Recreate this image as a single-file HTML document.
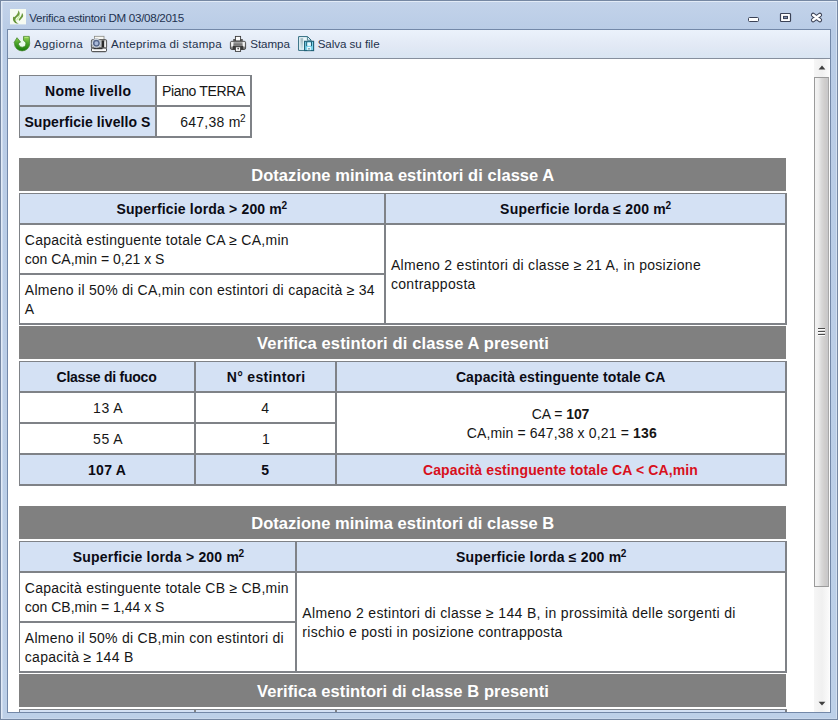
<!DOCTYPE html>
<html><head><meta charset="utf-8">
<style>
*{box-sizing:border-box;margin:0;padding:0}
html,body{width:838px;height:720px;overflow:hidden;background:#bccfe8;font-family:"Liberation Sans",sans-serif;}
#win{position:absolute;left:0;top:0;width:838px;height:720px;background:linear-gradient(#c3d3ea 0,#b9cce6 29px,#bdd0e8 100%);border:1px solid #7688a3;}
#hl{position:absolute;left:1px;top:1px;width:836px;height:718px;border:1px solid #e2ebf7;border-right-color:#d3e0f1;border-bottom-color:#c9d8ec;box-shadow:inset 1px 0 0 #d0ddef}
#inner{position:absolute;left:7px;top:29px;width:824px;height:684px;border:1px solid #7388a8;background:#fff;}
#tb{position:absolute;left:8px;top:30px;width:822px;height:29px;background:linear-gradient(#ebf2fb 0,#e2e9f5 55%,#d9e5f2 100%);border-bottom:1px solid #868f9d}
#clip{position:absolute;left:8px;top:59px;width:806px;height:653px;overflow:hidden;background:#fff}
#page{position:absolute;left:-8px;top:-59px;width:838px;height:800px}
#sb{position:absolute;left:814px;top:59px;width:16px;height:653px;background:linear-gradient(90deg,#f6f6f6,#f0f0f0 50%,#fafafa 92%,#fff)}
#thumb{position:absolute;left:0;top:18px;width:15px;height:510px;border:1px solid #9b9b9b;border-right-color:#a8a8a8;background:linear-gradient(90deg,#f3f3f3 0,#eeeeee 25%,#dadada 48%,#cfcdcc 75%,#c8c8ca 100%)}
.band{position:absolute;left:19px;width:767px;height:33px;background:#808080}
.c{position:absolute;border:1px solid #7f8287;background:#fff}
.h{background:#d4e1f4}
.o{position:absolute;border-right:1px solid #7f8287;border-bottom:1px solid #7f8287}
.t{position:absolute;white-space:nowrap;line-height:20px;font-family:"Liberation Sans",sans-serif}
sup{font-size:0.72em;line-height:0;vertical-align:0.52em;letter-spacing:0;margin-left:-0.5px}
svg{position:absolute;overflow:visible}
</style></head><body>
<div id="win"></div><div id="hl"></div>
<div id="inner"></div>
<div id="tb"></div>
<div id="clip"><div id="page">
<div class=o style="left:19px;top:75px;width:233px;height:63px"></div><div class=o style="left:19px;top:193px;width:768px;height:132px"></div><div class=o style="left:19px;top:361px;width:768px;height:125px"></div><div class=o style="left:19px;top:541px;width:768px;height:132px"></div><div class=o style="left:19px;top:709px;width:768px;height:52px"></div><div class="c h" style="left:19px;top:75px;width:137px;height:31px"></div><div class="c" style="left:156px;top:75px;width:95px;height:31px"></div><div class="c h" style="left:19px;top:106px;width:137px;height:31px"></div><div class="c" style="left:156px;top:106px;width:95px;height:31px"></div><div class="c h" style="left:19px;top:193px;width:366px;height:31px"></div><div class="c h" style="left:385px;top:193px;width:401px;height:31px"></div><div class="c" style="left:19px;top:224px;width:366px;height:50px"></div><div class="c" style="left:19px;top:274px;width:366px;height:50px"></div><div class="c" style="left:385px;top:224px;width:401px;height:100px"></div><div class="c h" style="left:19px;top:361px;width:176px;height:31px"></div><div class="c h" style="left:195px;top:361px;width:141px;height:31px"></div><div class="c h" style="left:336px;top:361px;width:450px;height:31px"></div><div class="c" style="left:19px;top:392px;width:176px;height:31px"></div><div class="c" style="left:195px;top:392px;width:141px;height:31px"></div><div class="c" style="left:19px;top:423px;width:176px;height:31px"></div><div class="c" style="left:195px;top:423px;width:141px;height:31px"></div><div class="c" style="left:336px;top:392px;width:450px;height:62px"></div><div class="c h" style="left:19px;top:454px;width:176px;height:31px"></div><div class="c h" style="left:195px;top:454px;width:141px;height:31px"></div><div class="c h" style="left:336px;top:454px;width:450px;height:31px"></div><div class="c h" style="left:19px;top:541px;width:277px;height:31px"></div><div class="c h" style="left:296px;top:541px;width:490px;height:31px"></div><div class="c" style="left:19px;top:572px;width:277px;height:50px"></div><div class="c" style="left:19px;top:622px;width:277px;height:50px"></div><div class="c" style="left:296px;top:572px;width:490px;height:100px"></div><div class="c h" style="left:19px;top:709px;width:176px;height:31px"></div><div class="c h" style="left:195px;top:709px;width:141px;height:31px"></div><div class="c h" style="left:336px;top:709px;width:450px;height:31px"></div>
<div class=band style="top:158px"></div><div class=band style="top:326px"></div><div class=band style="top:506px"></div><div class=band style="top:674px"></div>
</div></div>
<div id="sb"><div id="thumb"></div></div>
<!-- title icon -->
<svg style="left:10px;top:9px" width="16" height="16" viewBox="10 9 16 16">
<defs><linearGradient id="gfl" x1="0" y1="0" x2="0" y2="1"><stop offset="0" stop-color="#75a046"/><stop offset="1" stop-color="#5e9030"/></linearGradient></defs>
<rect x="10" y="9" width="16" height="15.4" fill="#f6fbf2"/>
<path d="M18.4 10.2 C20.2 12.6 20.2 14.6 18.4 16 C16.4 17.5 15.2 18.6 15.4 20.2 C15.6 21.8 17 23 18.9 23.6 C16.4 23.8 14 22.6 13.2 20.4 C12.8 19.2 12.9 17.8 13.3 16.4 C13.7 16.9 14 17.1 14.4 17 C16.4 15.4 18.2 13.6 18.4 10.2 Z" fill="url(#gfl)"/>
<path d="M22 13 C23.4 14.4 23.6 16 22.4 17.6 C21.6 18.6 20.6 19.6 19.6 20.8 C19 20.4 18.6 20 18.7 19.4 C19.2 18.6 20.2 17.6 20.8 16.6 C21.4 15.6 21.8 14.6 22 13 Z" fill="#6a9a3c"/>
<path d="M19.6 15.4 C19.4 17 17.2 18.4 16.6 20.4" stroke="#c4f09a" stroke-width="1.1" fill="none"/>
</svg>
<!-- refresh -->
<svg style="left:13px;top:35px" width="18" height="18" viewBox="13 35 18 18">
<defs><linearGradient id="grf" x1="0" y1="36" x2="0" y2="51" gradientUnits="userSpaceOnUse"><stop offset="0" stop-color="#a3dc5e"/><stop offset="0.45" stop-color="#4ea62c"/><stop offset="1" stop-color="#157a08"/></linearGradient></defs>
<circle cx="22.1" cy="44" r="4.4" fill="#eafcec"/>
<path d="M14.5 43.6 L14.1 42.5 L17 37.7 L20.6 42.1 L18.6 42.9 A3.7 3.5 0 1 0 25.6 42.3 L23.5 40.4 L23.5 36.4 L29.3 36.4 L29.7 43.6 A7.6 7.3 0 0 1 14.5 43.6 Z" fill="url(#grf)" stroke="#3d7f25" stroke-width="0.7" stroke-linejoin="round"/>
<path d="M24.6 37.4 L28.3 37.4" stroke="#c4ee8c" stroke-width="0.9" opacity="0.8"/>
</svg>
<!-- print preview -->
<svg style="left:90px;top:35px" width="18" height="18" viewBox="90 35 18 18">
<rect x="94.5" y="36.3" width="9.5" height="4.2" fill="#f7f7f2" stroke="#8a8a84" stroke-width="0.8"/>
<rect x="91.4" y="39.6" width="15.2" height="8.6" rx="1.2" fill="#c9c9c6" stroke="#4a4a4a" stroke-width="0.9"/>
<rect x="101.6" y="40.4" width="2.6" height="7" fill="#2a2a2a"/>
<rect x="104.4" y="41.4" width="1.6" height="6" fill="#f0f0ee"/>
<rect x="91.5" y="48" width="15" height="3.7" rx="1.2" fill="#fbfbfb" stroke="#333" stroke-width="1"/>
<rect x="93.5" y="48" width="9" height="1.2" fill="#333"/>
<circle cx="96.4" cy="43.2" r="4.5" fill="#eef3f8" stroke="#9aa2ae" stroke-width="0.7"/>
<circle cx="96.4" cy="43.2" r="2.7" fill="#a9b9d9" stroke="#56668a" stroke-width="1.5"/>
</svg>
<!-- print -->
<svg style="left:229px;top:35px" width="18" height="18" viewBox="229 35 18 18">
<defs><linearGradient id="gpr" x1="0" y1="41" x2="0" y2="50" gradientUnits="userSpaceOnUse"><stop offset="0" stop-color="#d9d9d9"/><stop offset="0.5" stop-color="#9c9c9c"/><stop offset="1" stop-color="#6c6c6c"/></linearGradient></defs>
<rect x="233.2" y="39" width="9.6" height="3" fill="#5a5a5a"/>
<rect x="235.4" y="36.4" width="5.2" height="4.6" fill="#fafafa" stroke="#3c3c3c" stroke-width="0.9"/>
<rect x="230.4" y="41.3" width="15.2" height="8.2" rx="1.4" fill="url(#gpr)" stroke="#444" stroke-width="0.9"/>
<rect x="231.2" y="42.2" width="1.8" height="4.4" fill="#f4f4f4"/>
<rect x="243" y="42.2" width="1.8" height="4.4" fill="#f4f4f4"/>
<rect x="234" y="42.6" width="8" height="1" fill="#6e6e6e"/>
<rect x="234" y="44.4" width="8" height="1" fill="#5c5c5c"/>
<rect x="232.8" y="46" width="10.4" height="3.6" fill="#3a3a3a"/>
<rect x="235.4" y="46.8" width="5.2" height="4.6" fill="#fafafa" stroke="#3c3c3c" stroke-width="0.9"/>
<circle cx="238.2" cy="48.6" r="0.9" fill="#555"/>
</svg>
<!-- save -->
<svg style="left:297px;top:35px" width="18" height="18" viewBox="297 35 18 18">
<defs><linearGradient id="gsv" x1="0" y1="38" x2="0" y2="49" gradientUnits="userSpaceOnUse"><stop offset="0" stop-color="#9fb6bd"/><stop offset="1" stop-color="#cfe6ec"/></linearGradient></defs>
<path d="M298.6 36.6 L307.6 36.6 L311 40 L311 50.4 L298.6 50.4 Z" fill="#eaf8fc" stroke="#2f6b7e" stroke-width="1"/>
<path d="M307.4 36.8 L307.4 40.2 L310.8 40.2" fill="none" stroke="#2f6b7e" stroke-width="0.8"/>
<rect x="300.4" y="38.2" width="2.8" height="10.6" fill="url(#gsv)"/>
<rect x="304.6" y="41.3" width="9" height="9.3" fill="#7cd6ee" stroke="#1d5f75" stroke-width="1.1"/>
<rect x="306.2" y="41.6" width="1.1" height="4.6" fill="#1d5f75"/><rect x="310.9" y="41.6" width="1.1" height="4.6" fill="#1d5f75"/>
<rect x="307.3" y="42.6" width="3.6" height="3.2" fill="#e8f8fd"/>
<rect x="307.2" y="47" width="3.6" height="3.2" fill="#f2fcff"/>
<rect x="308.5" y="48" width="1" height="1.6" fill="#1d5f75"/>
</svg>
<!-- title buttons -->
<svg style="left:744px;top:8px" width="84" height="20" viewBox="744 8 84 20">
<rect x="748.5" y="17.5" width="10" height="4" rx="1" fill="#fff" stroke="#3b4256" stroke-width="1"/>
<rect x="780.5" y="13.5" width="10" height="8" rx="0.8" fill="#fff" stroke="#3b4256" stroke-width="1.2"/>
<rect x="783.5" y="16.4" width="4" height="2.2" fill="#7f8fb0" stroke="#3b4256" stroke-width="1"/>
<path d="M813.2 15 L819.8 20 M819.8 15 L813.2 20" stroke="#3b4256" stroke-width="4.6" stroke-linecap="round" fill="none"/>
<path d="M813.2 15 L819.8 20 M819.8 15 L813.2 20" stroke="#fff" stroke-width="2.5" stroke-linecap="round" fill="none"/>
</svg>
<!-- scrollbar arrows + grip -->
<svg style="left:814px;top:59px" width="16" height="653" viewBox="814 59 16 653">
<path d="M818.6 69.6 L822 65.6 L825.4 69.6 Z" fill="#3f3f3f"/>
<path d="M818.6 701.8 L822 705.6 L825.4 701.8 Z" fill="#3f3f3f"/>
<g fill="#4c4c4c"><rect x="818" y="328" width="7" height="1"/><rect x="818" y="331" width="7" height="1"/><rect x="818" y="334" width="7" height="1"/></g>
<g fill="#fdfdfd"><rect x="818" y="329" width="7" height="1"/><rect x="818" y="332" width="7" height="1"/><rect x="818" y="335" width="7" height="1"/></g>
</svg>

<span class=t style="left:29.2px;top:8.0px;font-size:11.6px;font-weight:400;color:#1e3250;letter-spacing:-0.301px">Verifica estintori DM 03/08/2015</span>
<span class=t style="left:34.0px;top:33.5px;font-size:11.6px;font-weight:400;color:#24324c;letter-spacing:0.325px">Aggiorna</span>
<span class=t style="left:111.1px;top:33.5px;font-size:11.6px;font-weight:400;color:#24324c;letter-spacing:0.237px">Anteprima di stampa</span>
<span class=t style="left:250.3px;top:33.5px;font-size:11.6px;font-weight:400;color:#24324c;letter-spacing:-0.074px">Stampa</span>
<span class=t style="left:317.7px;top:33.5px;font-size:11.6px;font-weight:400;color:#24324c;letter-spacing:-0.051px">Salva su file</span>
<span class=t style="left:45.0px;top:81.0px;font-size:14px;font-weight:700;color:#0b0b14;letter-spacing:0.321px">Nome livello</span>
<span class=t style="left:24.4px;top:112.0px;font-size:14px;font-weight:700;color:#0b0b14;letter-spacing:0.079px">Superficie livello S</span>
<span class=t style="left:162.0px;top:81.0px;font-size:14px;font-weight:400;color:#161616;letter-spacing:-0.351px">Piano TERRA</span>
<span class=t style="left:180.2px;top:112.0px;font-size:14px;font-weight:400;color:#161616;letter-spacing:0.252px">647,38 m<sup>2</sup></span>
<span class=t style="left:251.2px;top:164.5px;font-size:16.5px;font-weight:700;color:#fff;letter-spacing:0.055px">Dotazione minima estintori di classe A</span>
<span class=t style="left:257.1px;top:332.5px;font-size:16.5px;font-weight:700;color:#fff;letter-spacing:0.131px">Verifica estintori di classe A presenti</span>
<span class=t style="left:251.2px;top:512.5px;font-size:16.5px;font-weight:700;color:#fff;letter-spacing:0.039px">Dotazione minima estintori di classe B</span>
<span class=t style="left:257.1px;top:680.5px;font-size:16.5px;font-weight:700;color:#fff;letter-spacing:0.099px">Verifica estintori di classe B presenti</span>
<span class=t style="left:116.4px;top:199.0px;font-size:14px;font-weight:700;color:#0b0b14;letter-spacing:0.172px">Superficie lorda &gt; 200 m<sup>2</sup></span>
<span class=t style="left:500.1px;top:199.0px;font-size:14px;font-weight:700;color:#0b0b14;letter-spacing:0.205px">Superficie lorda ≤ 200 m<sup>2</sup></span>
<span class=t style="left:24.8px;top:230.0px;font-size:14px;font-weight:400;color:#161616;letter-spacing:0.268px">Capacità estinguente totale CA ≥ CA,min</span>
<span class=t style="left:24.8px;top:249.0px;font-size:14px;font-weight:400;color:#161616;letter-spacing:-0.004px">con CA,min = 0,21 x S</span>
<span class=t style="left:24.8px;top:280.0px;font-size:14px;font-weight:400;color:#161616;letter-spacing:0.274px">Almeno il 50% di CA,min con estintori di capacità ≥ 34</span>
<span class=t style="left:24.8px;top:299.0px;font-size:14px;font-weight:400;color:#161616;letter-spacing:0.000px">A</span>
<span class=t style="left:390.9px;top:255.0px;font-size:14px;font-weight:400;color:#161616;letter-spacing:0.295px">Almeno 2 estintori di classe ≥ 21 A, in posizione</span>
<span class=t style="left:390.9px;top:274.0px;font-size:14px;font-weight:400;color:#161616;letter-spacing:0.322px">contrapposta</span>
<span class=t style="left:56.5px;top:367.0px;font-size:14px;font-weight:700;color:#0b0b14;letter-spacing:-0.233px">Classe di fuoco</span>
<span class=t style="left:226.7px;top:367.0px;font-size:14px;font-weight:700;color:#0b0b14;letter-spacing:0.334px">N° estintori</span>
<span class=t style="left:455.9px;top:367.0px;font-size:14px;font-weight:700;color:#0b0b14;letter-spacing:0.112px">Capacità estinguente totale CA</span>
<span class=t style="left:93.1px;top:398.0px;font-size:14px;font-weight:400;color:#161616;letter-spacing:0.523px">13 A</span>
<span class=t style="left:93.1px;top:429.0px;font-size:14px;font-weight:400;color:#161616;letter-spacing:0.523px">55 A</span>
<span class=t style="left:88.1px;top:460.0px;font-size:14px;font-weight:700;color:#0b0b14;letter-spacing:0.239px">107 A</span>
<span class=t style="left:261.3px;top:398.0px;font-size:14px;font-weight:400;color:#161616;letter-spacing:0.000px">4</span>
<span class=t style="left:261.9px;top:429.0px;font-size:14px;font-weight:400;color:#161616;letter-spacing:0.000px">1</span>
<span class=t style="left:261.3px;top:460.0px;font-size:14px;font-weight:700;color:#0b0b14;letter-spacing:0.000px">5</span>
<span class=t style="left:531.8px;top:404.0px;font-size:14px;font-weight:400;color:#161616;letter-spacing:-0.057px">CA = <b>107</b></span>
<span class=t style="left:466.7px;top:423.0px;font-size:14px;font-weight:400;color:#161616;letter-spacing:0.148px">CA,min = 647,38 x 0,21 = <b>136</b></span>
<span class=t style="left:423.0px;top:460.0px;font-size:14px;font-weight:700;color:#d8101c;letter-spacing:0.113px">Capacità estinguente totale CA &lt; CA,min</span>
<span class=t style="left:72.8px;top:547.0px;font-size:14px;font-weight:700;color:#0b0b14;letter-spacing:0.201px">Superficie lorda &gt; 200 m<sup>2</sup></span>
<span class=t style="left:456.0px;top:547.0px;font-size:14px;font-weight:700;color:#0b0b14;letter-spacing:0.180px">Superficie lorda ≤ 200 m<sup>2</sup></span>
<span class=t style="left:24.8px;top:578.0px;font-size:14px;font-weight:400;color:#161616;letter-spacing:0.248px">Capacità estinguente totale CB ≥ CB,min</span>
<span class=t style="left:24.8px;top:597.0px;font-size:14px;font-weight:400;color:#161616;letter-spacing:-0.004px">con CB,min = 1,44 x S</span>
<span class=t style="left:24.8px;top:628.0px;font-size:14px;font-weight:400;color:#161616;letter-spacing:0.271px">Almeno il 50% di CB,min con estintori di</span>
<span class=t style="left:24.8px;top:647.0px;font-size:14px;font-weight:400;color:#161616;letter-spacing:0.286px">capacità ≥ 144 B</span>
<span class=t style="left:302.3px;top:603.0px;font-size:14px;font-weight:400;color:#161616;letter-spacing:0.328px">Almeno 2 estintori di classe ≥ 144 B, in prossimità delle sorgenti di</span>
<span class=t style="left:302.3px;top:622.0px;font-size:14px;font-weight:400;color:#161616;letter-spacing:0.296px">rischio e posti in posizione contrapposta</span>
</body></html>
